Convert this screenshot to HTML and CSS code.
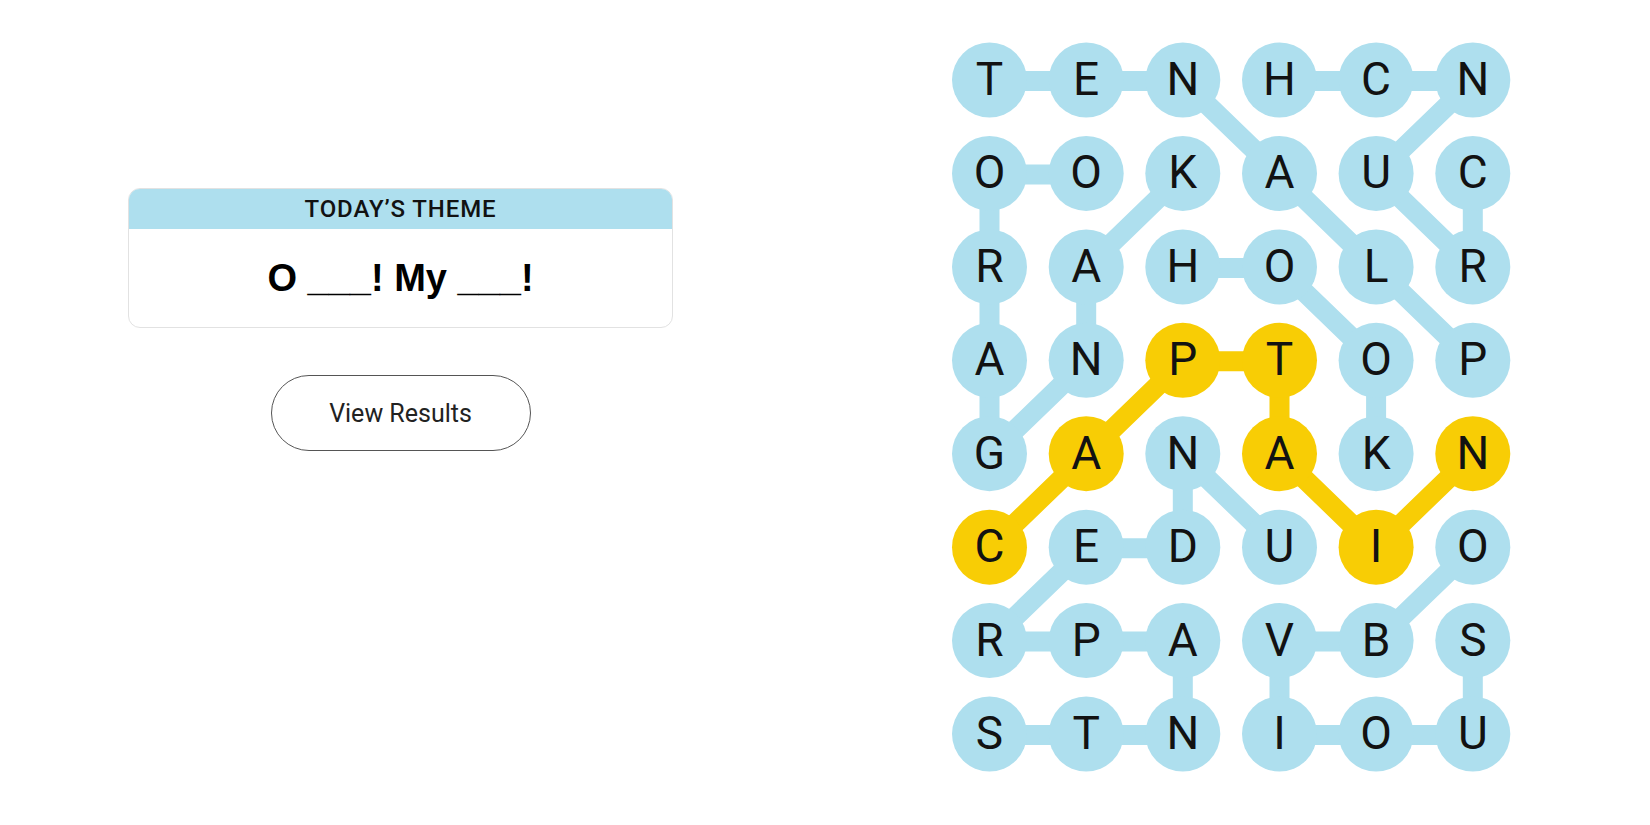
FILE: index.html
```html
<!DOCTYPE html>
<html lang="en">
<head>
<meta charset="utf-8">
<title>Strands</title>
<link rel="stylesheet" href="styles.css">
</head>
<body>
<div class="page">
  <section class="left">
    <div class="card">
      <div class="card-head">Today’s Theme</div>
      <div class="card-body">O ___! My ___!</div>
    </div>
    <button class="btn">View Results</button>
  </section>
  <svg class="board" width="580" height="750" viewBox="0 0 580 750">
    <g class="paths">
      <polyline class="blue" points="48.5,48 145.2,48 241.8,48 338.5,141.4 435.1,234.9 531.8,328.3"/>
      <polyline class="blue" points="338.5,48 435.1,48 531.8,48 435.1,141.4 531.8,234.9 531.8,141.4"/>
      <polyline class="blue" points="145.2,141.4 48.5,141.4 48.5,234.9 48.5,328.3 48.5,421.7 145.2,328.3 145.2,234.9 241.8,141.4"/>
      <polyline class="blue" points="241.8,234.9 338.5,234.9 435.1,328.3 435.1,421.7"/>
      <polyline class="blue" points="338.5,515.2 241.8,421.7 241.8,515.2 145.2,515.2 48.5,608.6 145.2,608.6 241.8,608.6 241.8,702 145.2,702 48.5,702"/>
      <polyline class="blue" points="531.8,515.2 435.1,608.6 338.5,608.6 338.5,702 435.1,702 531.8,702 531.8,608.6"/>
      <polyline class="yellow" points="48.5,515.2 145.2,421.7 241.8,328.3 338.5,328.3 338.5,421.7 435.1,515.2 531.8,421.7"/>
    </g>
    <g class="nodes">
      <circle class="n" cx="48.5" cy="47" r="37.5"/><circle class="n" cx="145.2" cy="47" r="37.5"/><circle class="n" cx="241.8" cy="47" r="37.5"/><circle class="n" cx="338.5" cy="47" r="37.5"/><circle class="n" cx="435.1" cy="47" r="37.5"/><circle class="n" cx="531.8" cy="47" r="37.5"/>
      <circle class="n" cx="48.5" cy="140.4" r="37.5"/><circle class="n" cx="145.2" cy="140.4" r="37.5"/><circle class="n" cx="241.8" cy="140.4" r="37.5"/><circle class="n" cx="338.5" cy="140.4" r="37.5"/><circle class="n" cx="435.1" cy="140.4" r="37.5"/><circle class="n" cx="531.8" cy="140.4" r="37.5"/>
      <circle class="n" cx="48.5" cy="233.9" r="37.5"/><circle class="n" cx="145.2" cy="233.9" r="37.5"/><circle class="n" cx="241.8" cy="233.9" r="37.5"/><circle class="n" cx="338.5" cy="233.9" r="37.5"/><circle class="n" cx="435.1" cy="233.9" r="37.5"/><circle class="n" cx="531.8" cy="233.9" r="37.5"/>
      <circle class="n" cx="48.5" cy="327.3" r="37.5"/><circle class="n" cx="145.2" cy="327.3" r="37.5"/><circle class="n y" cx="241.8" cy="327.3" r="37.5"/><circle class="n y" cx="338.5" cy="327.3" r="37.5"/><circle class="n" cx="435.1" cy="327.3" r="37.5"/><circle class="n" cx="531.8" cy="327.3" r="37.5"/>
      <circle class="n" cx="48.5" cy="420.7" r="37.5"/><circle class="n y" cx="145.2" cy="420.7" r="37.5"/><circle class="n" cx="241.8" cy="420.7" r="37.5"/><circle class="n y" cx="338.5" cy="420.7" r="37.5"/><circle class="n" cx="435.1" cy="420.7" r="37.5"/><circle class="n y" cx="531.8" cy="420.7" r="37.5"/>
      <circle class="n y" cx="48.5" cy="514.2" r="37.5"/><circle class="n" cx="145.2" cy="514.2" r="37.5"/><circle class="n" cx="241.8" cy="514.2" r="37.5"/><circle class="n" cx="338.5" cy="514.2" r="37.5"/><circle class="n y" cx="435.1" cy="514.2" r="37.5"/><circle class="n" cx="531.8" cy="514.2" r="37.5"/>
      <circle class="n" cx="48.5" cy="607.6" r="37.5"/><circle class="n" cx="145.2" cy="607.6" r="37.5"/><circle class="n" cx="241.8" cy="607.6" r="37.5"/><circle class="n" cx="338.5" cy="607.6" r="37.5"/><circle class="n" cx="435.1" cy="607.6" r="37.5"/><circle class="n" cx="531.8" cy="607.6" r="37.5"/>
      <circle class="n" cx="48.5" cy="701" r="37.5"/><circle class="n" cx="145.2" cy="701" r="37.5"/><circle class="n" cx="241.8" cy="701" r="37.5"/><circle class="n" cx="338.5" cy="701" r="37.5"/><circle class="n" cx="435.1" cy="701" r="37.5"/><circle class="n" cx="531.8" cy="701" r="37.5"/>
    </g>
    <g class="letters">
      <text x="48.5" y="62">T</text><text x="145.2" y="62">E</text><text x="241.8" y="62">N</text><text x="338.5" y="62">H</text><text x="435.1" y="62">C</text><text x="531.8" y="62">N</text>
      <text x="48.5" y="155.4">O</text><text x="145.2" y="155.4">O</text><text x="241.8" y="155.4">K</text><text x="338.5" y="155.4">A</text><text x="435.1" y="155.4">U</text><text x="531.8" y="155.4">C</text>
      <text x="48.5" y="248.9">R</text><text x="145.2" y="248.9">A</text><text x="241.8" y="248.9">H</text><text x="338.5" y="248.9">O</text><text x="435.1" y="248.9">L</text><text x="531.8" y="248.9">R</text>
      <text x="48.5" y="342.3">A</text><text x="145.2" y="342.3">N</text><text x="241.8" y="342.3">P</text><text x="338.5" y="342.3">T</text><text x="435.1" y="342.3">O</text><text x="531.8" y="342.3">P</text>
      <text x="48.5" y="435.7">G</text><text x="145.2" y="435.7">A</text><text x="241.8" y="435.7">N</text><text x="338.5" y="435.7">A</text><text x="435.1" y="435.7">K</text><text x="531.8" y="435.7">N</text>
      <text x="48.5" y="529.2">C</text><text x="145.2" y="529.2">E</text><text x="241.8" y="529.2">D</text><text x="338.5" y="529.2">U</text><text x="435.1" y="529.2">I</text><text x="531.8" y="529.2">O</text>
      <text x="48.5" y="622.6">R</text><text x="145.2" y="622.6">P</text><text x="241.8" y="622.6">A</text><text x="338.5" y="622.6">V</text><text x="435.1" y="622.6">B</text><text x="531.8" y="622.6">S</text>
      <text x="48.5" y="716">S</text><text x="145.2" y="716">T</text><text x="241.8" y="716">N</text><text x="338.5" y="716">I</text><text x="435.1" y="716">O</text><text x="531.8" y="716">U</text>
    </g>
  </svg>
</div>
</body>
</html>
```

FILE: styles.css
```css
html, body {
  margin: 0;
  padding: 0;
  background: #ffffff;
}

body {
  font-family: "Liberation Sans", Arial, sans-serif;
  color: #121212;
}

.page {
  display: flex;
  align-items: flex-start;
  width: 1650px;
  height: 825px;
  overflow: hidden;
}

.left {
  width: 545px;
  margin-left: 128px;
  padding-top: 188px;
  display: flex;
  flex-direction: column;
  align-items: center;
}

.card {
  width: 100%;
  box-sizing: border-box;
  height: 140px;
  border: 1px solid #e2e2e2;
  border-radius: 12px;
  overflow: hidden;
  display: flex;
  flex-direction: column;
}

.card-head {
  height: 40px;
  background: #aedfee;
  display: flex;
  align-items: center;
  justify-content: center;
  font-family: Roboto, "Liberation Sans", Arial, sans-serif;
  font-size: 24px;
  font-weight: 500;
  letter-spacing: 0.9px;
  text-transform: uppercase;
  color: #121212;
}

.card-body {
  flex: 1;
  display: flex;
  align-items: center;
  justify-content: center;
  font-size: 38px;
  font-weight: 700;
  color: #000000;
}

.btn {
  margin-top: 47px;
  width: 260px;
  height: 76px;
  border: 1px solid #555555;
  border-radius: 38px;
  background: #ffffff;
  font-family: Roboto, "Liberation Sans", Arial, sans-serif;
  font-size: 25px;
  color: #222222;
  padding: 0;
}

.board {
  display: block;
  margin-left: 268px;
  margin-top: 33px;
  flex: none;
}

.paths polyline {
  fill: none;
  stroke-width: 20;
  stroke-linejoin: round;
  stroke-linecap: round;
}

.paths .blue {
  stroke: #aedfee;
}

.paths .yellow {
  stroke: #f8cd05;
}

.nodes .n {
  fill: #aedfee;
}

.nodes .y {
  fill: #f8cd05;
}

.letters text {
  font-family: Roboto, "Liberation Sans", Arial, sans-serif;
  font-size: 46px;
  font-weight: 400;
  fill: #121212;
  text-anchor: middle;
}
```
